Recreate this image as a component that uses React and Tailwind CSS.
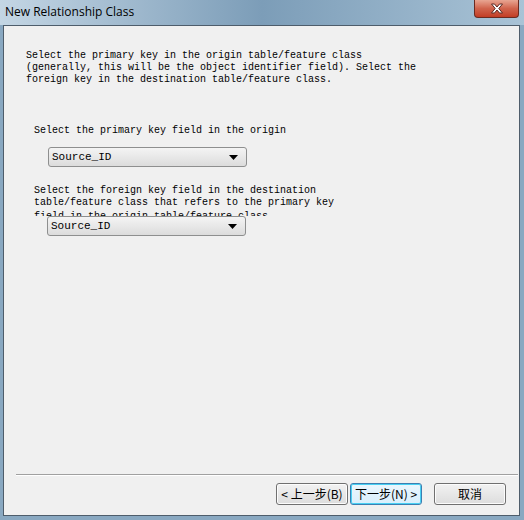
import React from 'react'

const mono = { fontFamily: '"Liberation Mono", "Noto Sans CJK SC", monospace' }

const Dropdown = ({ value, className }) => (
  <div
    className={`flex items-center justify-between w-[199px] h-[20px] rounded-[3px] border border-[#8e8f8f] bg-gradient-to-b from-[#f4f4f4] to-[#dcdcdc] pl-[3px] pr-[8px] ${className}`}
  >
    <span className='text-[11px] leading-none text-black' style={mono}>{value}</span>
    <svg width='9' height='5' viewBox='0 0 9 5'>
      <path d='M0 0h9L4.5 5z' fill='#000' />
    </svg>
  </div>
)

const WinButton = ({ children, focused }) => (
  <button
    className={`w-[72px] h-[22px] rounded-[3px] border text-[12px] leading-none text-black bg-gradient-to-b flex items-center justify-center ${
      focused
        ? 'border-[#3c7fb1] from-[#eaf6fd] to-[#d9effc] shadow-[inset_0_0_0_1px_#48d0f3]'
        : 'border-[#707070] from-[#f2f2f2] to-[#dddddd] shadow-[inset_0_0_0_1px_#fcfcfc]'
    }`}
    style={{ fontFamily: '"Noto Sans CJK SC", "Liberation Mono", sans-serif' }}
  >
    {children}
  </button>
)

export default function App() {
  return (
    <div className='w-[524px] h-[520px] flex flex-col bg-[#89a8c1]'>
      {/* Title bar */}
      <div className='h-[25px] shrink-0 flex items-start justify-between bg-gradient-to-r from-[#c4d6e4] via-[#7c9db8] to-[#a9c3d6]'>
        <div
          className='pl-[5px] pt-[3px] text-[12px] text-black'
          style={{ fontFamily: '"Open Sans", "Noto Sans", sans-serif' }}
        >
          New Relationship Class
        </div>
        <div className='mr-[5px] w-[45px] h-[18px] rounded-b-[4px] border border-t-0 border-[#6b2a20] bg-gradient-to-b from-[#e8a592] via-[#d0634c] to-[#c23c24] flex items-center justify-center'>
          <svg width='14' height='11' viewBox='0 0 14 11'>
            <path
              d='M1.5 1h3L7 4 9.5 1h3L8.8 5.5 12.5 10h-3L7 7 4.5 10h-3L5.2 5.5z'
              fill='#fff'
              stroke='#5a2a24'
              strokeWidth='1'
              strokeLinejoin='round'
            />
          </svg>
        </div>
      </div>

      {/* Client area */}
      <div className='flex-1 ml-[3px] mr-[4px] mb-[4px] border border-[#4e5d6b] bg-[#f0f0f0] flex flex-col text-black'>
        <div className='text-[10px] leading-[12px] pl-[22px] pt-[24px]' style={mono}>
          <div>Select the primary key in the origin table/feature class</div>
          <div>(generally, this will be the object identifier field). Select the</div>
          <div>foreign key in the destination table/feature class.</div>
        </div>

        <div className='text-[10px] leading-[12px] pl-[30px] mt-[39px]' style={mono}>
          Select the primary key field in the origin
        </div>
        <Dropdown value='Source_ID' className='ml-[44px] mt-[10px]' />

        <div className='text-[10px] leading-[12px] pl-[30px] mt-[18px] h-[31px] overflow-hidden' style={mono}>
          <div>Select the foreign key field in the destination</div>
          <div>table/feature class that refers to the primary key</div>
          <div className='mt-[2px]'>field in the origin table/feature class</div>
        </div>
        <Dropdown value='Source_ID' className='ml-[43px]' />

        <div className='flex-1' />
        <div className='ml-[12px] mr-[1px] h-[2px] border-t border-[#a0a0a0] border-b border-b-white' />
        <div className='flex items-center pt-[7px] pb-[10px] pl-[272px]'>
          <WinButton>&lt; 上一步(B)</WinButton>
          <div className='ml-[2px]'>
            <WinButton focused>下一步(N) &gt;</WinButton>
          </div>
          <div className='ml-[12px]'>
            <WinButton>取消</WinButton>
          </div>
        </div>
      </div>
    </div>
  )
}
